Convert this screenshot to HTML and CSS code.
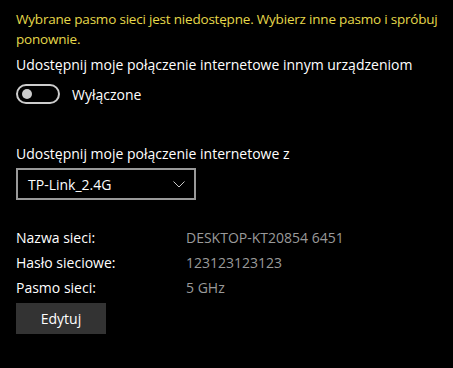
FILE: index.html
```html
<!DOCTYPE html>
<html lang="pl">
<head>
    <meta charset="UTF-8">
    <title>Mobilny hotspot</title>
    <link rel="stylesheet" href="styles.css">
</head>
<body>
    <div class="page">
        <p class="warning">Wybrane pasmo sieci jest niedostępne. Wybierz inne pasmo i spróbuj<br>ponownie.</p>

        <p class="label">Udostępnij moje połączenie internetowe innym urządzeniom</p>
        <div class="toggle-row">
            <span class="toggle"><span class="knob"></span></span>
            <span class="toggle-text">Wyłączone</span>
        </div>

        <p class="label share-from">Udostępnij moje połączenie internetowe z</p>
        <div class="select">
            <span>TP-Link_2.4G</span>
            <svg class="chevron" width="12" height="7" viewBox="0 0 12 7">
                <path d="M0.5 0.5 L6 6 L11.5 0.5" fill="none" stroke="#c8c8c8" stroke-width="1"/>
            </svg>
        </div>

        <div class="props">
            <span class="prop-name">Nazwa sieci:</span>
            <span class="prop-value">DESKTOP-KT20854 6451</span>
            <span class="prop-name">Hasło sieciowe:</span>
            <span class="prop-value">123123123123</span>
            <span class="prop-name">Pasmo sieci:</span>
            <span class="prop-value">5 GHz</span>
        </div>

        <button class="edit-btn">Edytuj</button>
    </div>
</body>
</html>
```

FILE: styles.css
```css
body {
    margin: 0;
    background-color: #000;
    color: #fff;
    font-family: "Open Sans", "Noto Sans", sans-serif;
    font-size: 14px;
}
.page {
    padding: 9px 0 0 16px;
}
p {
    margin: 0;
}
.warning {
    color: #e6d84a;
    font-size: 13.5px;
    letter-spacing: -0.2px;
    line-height: 20px;
}
.label {
    line-height: 20px;
    margin-top: 6px;
}
.toggle-row {
    display: flex;
    align-items: center;
    margin-top: 9px;
    height: 20px;
}
.toggle {
    box-sizing: border-box;
    width: 44px;
    height: 20px;
    border: 2px solid #cccccc;
    border-radius: 10px;
    display: flex;
    align-items: center;
    padding-left: 4px;
}
.knob {
    width: 10px;
    height: 10px;
    border-radius: 50%;
    background-color: #cccccc;
}
.toggle-text {
    margin-left: 12px;
}
.share-from {
    margin-top: 40px;
}
.select {
    box-sizing: border-box;
    width: 180px;
    height: 32px;
    margin-top: 4px;
    border: 2px solid #999999;
    display: flex;
    align-items: center;
    justify-content: space-between;
    padding: 0 9px 0 10px;
}
.chevron {
    display: block;
}
.props {
    display: grid;
    grid-template-columns: 170px auto;
    row-gap: 5px;
    margin-top: 28px;
    line-height: 20px;
}
.prop-value {
    color: #9a9a9a;
}
.edit-btn {
    display: block;
    width: 90px;
    height: 31px;
    margin-top: 5px;
    border: none;
    background-color: #333333;
    color: #fff;
    font-family: inherit;
    font-size: 14px;
}
```
